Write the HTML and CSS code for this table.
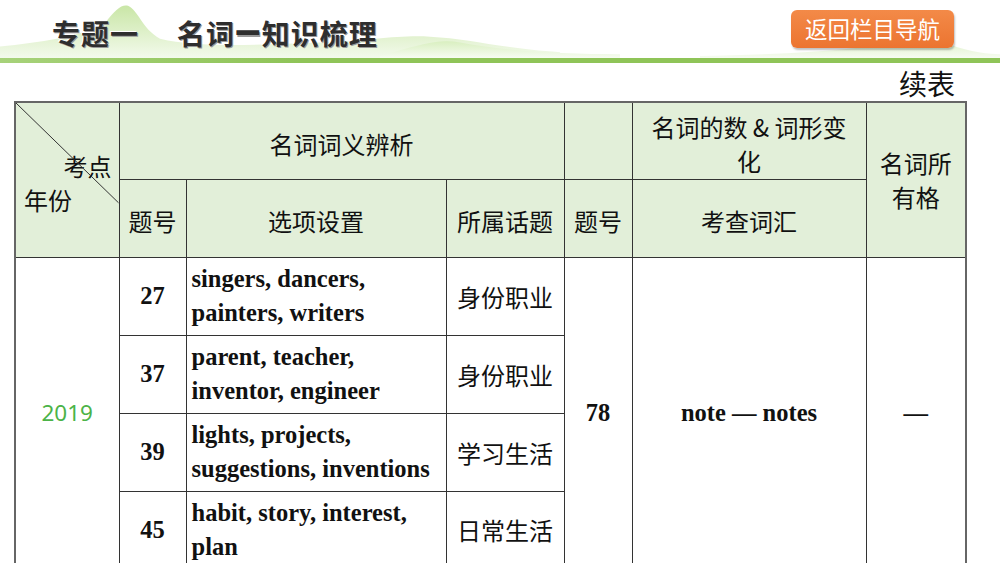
FILE: index.html
```html
<!DOCTYPE html>
<html lang="zh">
<head>
<meta charset="utf-8">
<link rel="stylesheet" href="styles.css">
</head>
<body>
<div class="page">
  <header class="topbar">
    <svg class="hills" viewBox="0 0 1000 60" preserveAspectRatio="none" aria-hidden="true">
      <defs>
        <linearGradient id="hg" x1="0" y1="0" x2="0" y2="1">
          <stop offset="0" stop-color="#c9e6a6"/>
          <stop offset="1" stop-color="#f3faec"/>
        </linearGradient>
        <linearGradient id="hg2" x1="0" y1="0" x2="0" y2="1">
          <stop offset="0" stop-color="#d9efc0"/>
          <stop offset="1" stop-color="#f7fcf2"/>
        </linearGradient>
      </defs>
      <path d="M0 48 C40 44 80 38 105 24 C115 10 122 4 128 6 C138 10 142 30 160 40 C200 50 260 46 320 44 C370 42 400 36 430 38 C470 40 500 50 560 54 L560 60 L0 60 Z" fill="url(#hg)"/>
      <path d="M380 58 C420 46 440 40 460 44 C500 52 560 56 620 56 L620 60 L380 60 Z" fill="url(#hg2)"/>
      <path d="M700 58 C800 56 880 50 910 40 C925 36 935 38 950 46 C970 54 990 56 1000 56 L1000 60 L700 60 Z" fill="url(#hg2)"/>
    </svg>
    <h1 class="title"><span class="t1">专题一</span><span class="t2">名词<span class="dash">—</span>知识梳理</span></h1>
    <a class="navbtn">返回栏目导航</a>
  </header>
  <div class="greenbar"></div>
  <div class="cont">续表</div>
  <table class="grid">
    <colgroup>
      <col class="c1"><col class="c2"><col class="c3"><col class="c4"><col class="c5"><col class="c6"><col class="c7">
    </colgroup>
    <tr class="hr1">
      <th rowspan="2" class="corner">
        <svg class="diag" viewBox="0 0 100 100" preserveAspectRatio="none" aria-hidden="true"><line x1="0" y1="0" x2="100" y2="65" stroke="#333" stroke-width="1" vector-effect="non-scaling-stroke"/></svg>
        <span class="kd">考点</span>
        <span class="nf">年份</span>
      </th>
      <th colspan="3">名词词义辨析</th>
      <th></th>
      <th>名词的数 &amp; 词形变<br>化</th>
      <th rowspan="2" class="own">名词所<br>有格</th>
    </tr>
    <tr class="hr2">
      <th>题号</th>
      <th>选项设置</th>
      <th>所属话题</th>
      <th>题号</th>
      <th>考查词汇</th>
    </tr>
    <tr class="br">
      <td rowspan="4" class="year">2019</td>
      <td class="num">27</td>
      <td class="words">singers, dancers,<br>painters, writers</td>
      <td class="topic">身份职业</td>
      <td rowspan="4" class="num">78</td>
      <td rowspan="4" class="en">note — notes</td>
      <td rowspan="4" class="en">—</td>
    </tr>
    <tr class="br">
      <td class="num">37</td>
      <td class="words">parent, teacher,<br>inventor, engineer</td>
      <td class="topic">身份职业</td>
    </tr>
    <tr class="br">
      <td class="num">39</td>
      <td class="words">lights, projects,<br>suggestions, inventions</td>
      <td class="topic">学习生活</td>
    </tr>
    <tr class="br">
      <td class="num">45</td>
      <td class="words">habit, story, interest,<br>plan</td>
      <td class="topic">日常生活</td>
    </tr>
  </table>
</div>
</body>
</html>
```

FILE: styles.css
```css
html, body {
  margin: 0;
  padding: 0;
  background: #ffffff;
}
.page {
  width: 1000px;
  height: 563px;
  overflow: hidden;
  font-family: "Noto Sans CJK SC", "Liberation Sans", sans-serif;
  color: #111;
}
.topbar {
  position: relative;
  height: 58px;
  display: flex;
  align-items: flex-start;
  justify-content: space-between;
}
.hills {
  position: absolute;
  left: 0;
  top: 0;
  width: 1000px;
  height: 58px;
  z-index: 0;
}
.title {
  position: relative;
  z-index: 1;
  margin: 0;
  padding: 14px 0 0 52px;
  font-size: 28px;
  line-height: 38px;
  font-weight: 700;
  color: #2e2e2e;
  text-shadow: 1px 1px 0 #9a9a9a, -1px -1px 0 #ffffff;
  display: flex;
  gap: 38px;
  letter-spacing: 1px;
}
.dash {
  display: inline-block;
  font-weight: 900;
  transform: translateY(-6px) scaleY(1.5);
  letter-spacing: 1px;
}
.navbtn {
  position: relative;
  z-index: 1;
  margin: 10px 46px 0 0;
  width: 163px;
  height: 38px;
  box-sizing: border-box;
  border-radius: 6px;
  background: linear-gradient(#f38a48, #ec7430);
  color: #ffffff;
  font-size: 22.5px;
  line-height: 37px;
  text-align: center;
  box-shadow: 1px 2px 2px rgba(0,0,0,0.25);
}
.greenbar {
  height: 5px;
  background: linear-gradient(90deg, #a7d27a, #8fc458 30%, #8fc458);
}
.cont {
  height: 38px;
  display: flex;
  justify-content: flex-end;
  align-items: flex-end;
  padding-right: 45px;
  font-size: 28px;
  line-height: 36px;
  color: #111;
}
.grid {
  margin-left: 14px;
  border-collapse: collapse;
  table-layout: fixed;
  width: 951px;
  border: 2px solid #666;
}
.c1 { width: 104px; }
.c2 { width: 67px; }
.c3 { width: 260px; }
.c4 { width: 118px; }
.c5 { width: 68px; }
.c6 { width: 234px; }
.c7 { width: 100px; }
.grid th, .grid td {
  border: 1px solid #333;
  padding: 0;
  text-align: center;
  vertical-align: middle;
}
.grid th {
  background: #e2efd9;
  font-weight: 400;
  font-size: 24px;
  line-height: 34px;
  padding-top: 6px;
}
.hr1 { height: 77px; }
.hr2 { height: 78px; }
.br { height: 78px; }
.corner {
  position: relative;
  padding: 0 !important;
}
.diag {
  position: absolute;
  left: 0;
  top: 0;
  width: 100%;
  height: 100%;
}
.kd {
  display: block;
  text-align: right;
  padding-right: 7px;
  margin-top: 6px;
}
.nf {
  display: block;
  text-align: left;
  padding-left: 8px;
}
.own {
  padding-top: 0 !important;
}
.year {
  color: #4cb348;
  font-family: "Noto Sans", "Liberation Sans", sans-serif;
  font-size: 22.5px;
}
.num, .en {
  font-family: "Liberation Serif", serif;
  font-weight: 700;
  font-size: 24.5px;
}
.words {
  text-align: left !important;
  padding-left: 5px !important;
  font-family: "Liberation Serif", serif;
  font-weight: 700;
  font-size: 24.5px;
  line-height: 34px;
}
.topic {
  font-size: 24px;
}
```
